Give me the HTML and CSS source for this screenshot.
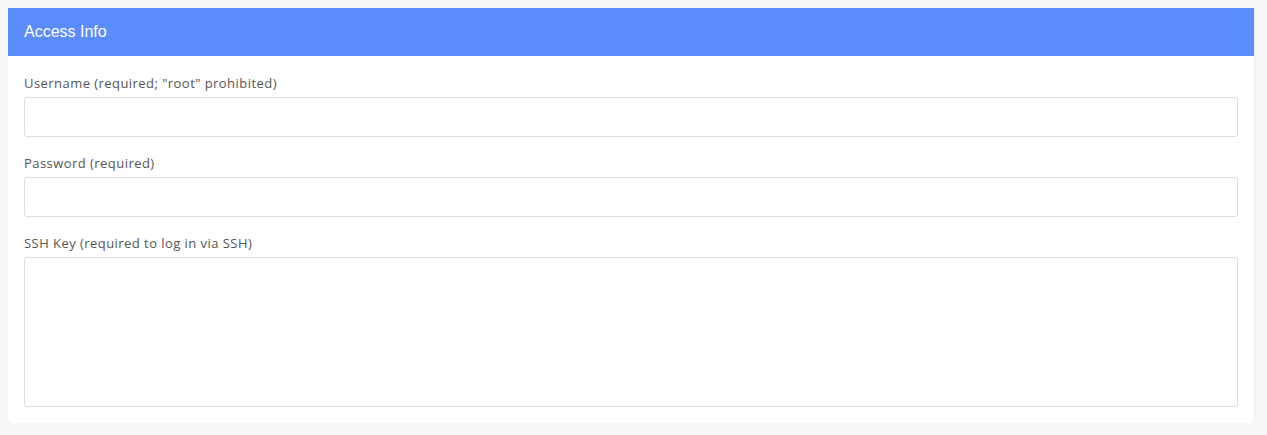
FILE: index.html
```html
<!DOCTYPE html>
<html lang="en">
<head>
    <meta charset="UTF-8">
    <meta name="viewport" content="width=device-width, initial-scale=1.0">
    <title>Access Info</title>
    <link rel="stylesheet" href="styles.css">
</head>
<body>
    <section class="tarjeta">
        <div class="tarjeta-titulo">Access Info</div>
        <div class="tarjeta-cuerpo">
            <div class="campo">
                <label for="usuario">Username (required; "root" prohibited)</label>
                <input type="text" id="usuario">
            </div>
            <div class="campo">
                <label for="clave">Password (required)</label>
                <input type="password" id="clave">
            </div>
            <div class="campo">
                <label for="llave">SSH Key (required to log in via SSH)</label>
                <textarea id="llave"></textarea>
            </div>
        </div>
    </section>
</body>
</html>
```

FILE: styles.css
```css
body {
    margin: 8px;
    background-color: #f7f7f8;
    font-family: "Open Sans", "Noto Sans", sans-serif;
}

.tarjeta {
    width: 1246px;
    background-color: white;
    border-radius: 0 0 4px 4px;
    box-shadow: 0 1px 3px rgba(0, 0, 0, 0.08);
}

.tarjeta-titulo {
    height: 48px;
    padding: 0 16px;
    display: flex;
    align-items: center;
    background-color: #5a8cfc;
    color: white;
    font-family: "Liberation Sans", Arial, sans-serif;
    font-size: 16px;
}

.tarjeta-cuerpo {
    padding: 17px 16px 16px;
    display: flex;
    flex-direction: column;
    gap: 16px;
}

.campo {
    display: flex;
    flex-direction: column;
}

.campo label {
    height: 20px;
    line-height: 20px;
    margin-bottom: 4px;
    font-size: 13px;
    letter-spacing: 0.45px;
    color: #555;
}

.campo input,
.campo textarea {
    box-sizing: border-box;
    width: 100%;
    height: 40px;
    margin: 0;
    border: 1px solid #dcdae4;
    border-radius: 3px;
    background: white;
    outline: none;
}

.campo textarea {
    height: 150px;
    resize: none;
}
```
